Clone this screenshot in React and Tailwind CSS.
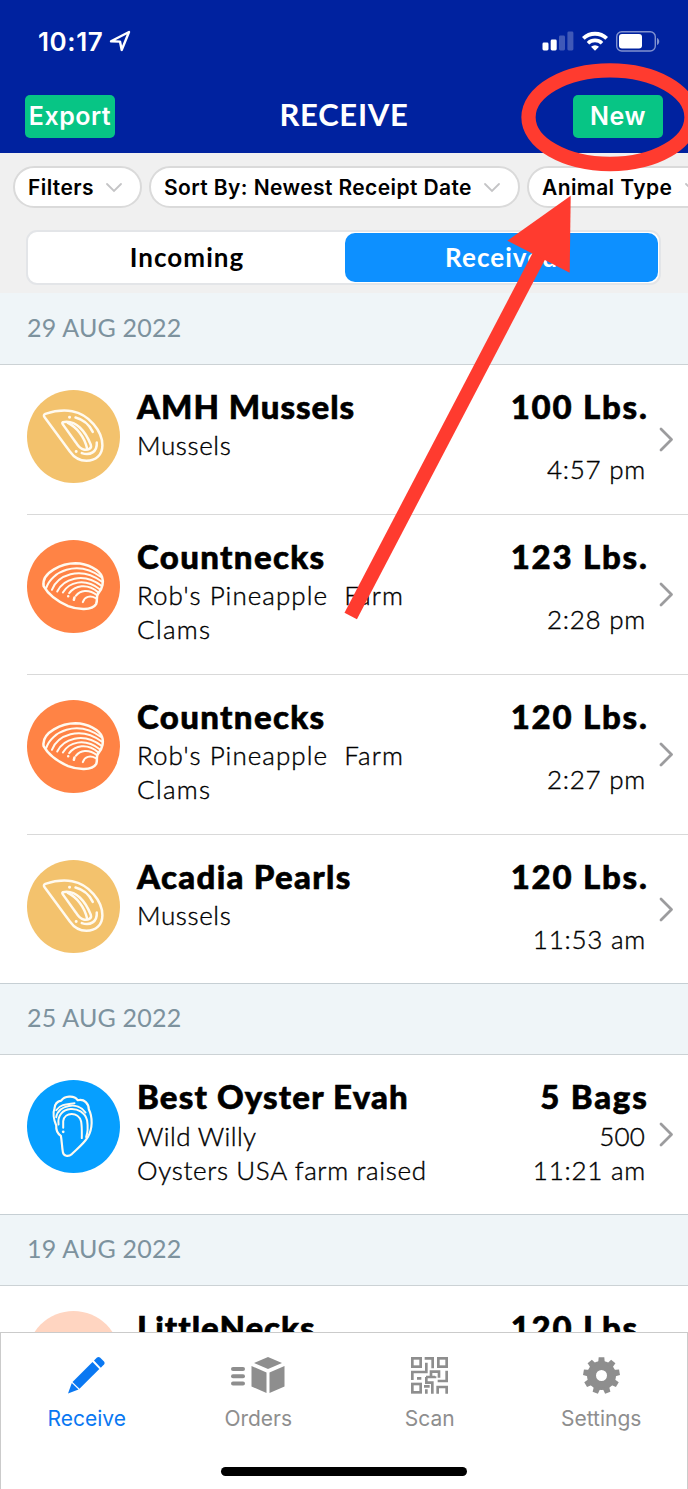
import clsx from "clsx";

const groups = [
  {
    date: "29 AUG 2022",
    rows: [
      { kind: "mussel", name: "AMH Mussels", spacing: "tracking-[0.95px]", lines: [["Mussels", "tracking-[0.6px]"]], qty: "100 Lbs.", time: "4:57 pm", height: "h-[150px]" },
      { kind: "clam", name: "Countnecks", spacing: "tracking-[1.35px]", lines: [["Rob's Pineapple  Farm", "tracking-[1.04px]"], ["Clams", "tracking-[1.3px]"]], qty: "123 Lbs.", time: "2:28 pm", height: "h-[160px]" },
      { kind: "clam", name: "Countnecks", spacing: "tracking-[1.35px]", lines: [["Rob's Pineapple  Farm", "tracking-[1.04px]"], ["Clams", "tracking-[1.3px]"]], qty: "120 Lbs.", time: "2:27 pm", height: "h-[160px]" },
      { kind: "mussel", name: "Acadia Pearls", spacing: "tracking-[1.3px]", lines: [["Mussels", "tracking-[0.6px]"]], qty: "120 Lbs.", time: "11:53 am", height: "h-[149px]" },
    ],
  },
  {
    date: "25 AUG 2022",
    rows: [
      { kind: "oyster", name: "Best Oyster Evah", spacing: "tracking-[1.15px]", lines: [["Wild Willy", "tracking-[0.4px]"], ["Oysters USA farm raised", "tracking-[0.66px]"]], qty: "5 Bags", count: "500", time: "11:21 am", height: "h-[160px]" },
    ],
  },
  {
    date: "19 AUG 2022",
    rows: [
      { kind: "none", name: "LittleNecks", spacing: "tracking-[1px]", lines: [], qty: "120 Lbs.", time: "", height: "h-[160px]" },
    ],
  },
];

function StatusBar() {
  return (
    <div className="flex h-[82px] items-center justify-between pl-[38px] pr-[28px] text-white">
      <div className="flex items-center gap-[6px]">
        <span className="pt-px font-['Inter',sans-serif] text-[26px] font-semibold leading-none tracking-[0.6px]">10:17</span>
        <svg width="22" height="22" viewBox="0 0 22 22" fill="none" stroke="white" strokeWidth="2.4" strokeLinejoin="round">
          <path d="M2 11.2 20 2 12.7 20 11 11.6Z" />
        </svg>
      </div>
      <div className="flex items-center gap-[8px]">
        <svg width="32" height="20" viewBox="0 0 32 20" fill="white">
          <rect x="0.5" y="11.5" width="6" height="8" rx="1.4" />
          <rect x="8.7" y="8.5" width="6" height="11" rx="1.4" />
          <rect x="17" y="4.5" width="6" height="15" rx="1.4" opacity="0.25" />
          <rect x="25.4" y="0.5" width="6" height="19" rx="1.4" opacity="0.25" />
        </svg>
        <svg width="26" height="20" viewBox="0 0 26 20" fill="none" stroke="white" strokeWidth="4">
          <path d="M1.3 7.4a16.8 16.8 0 0 1 23.4 0" />
          <path d="M6 12.2a10.2 10.2 0 0 1 14 0" strokeWidth="3.6" />
          <path d="M9 15.7a6 6 0 0 1 8 0L13 19.8Z" fill="white" stroke="none" />
        </svg>
        <svg width="44" height="21" viewBox="0 0 44 21">
          <rect x="0.7" y="0.7" width="38.6" height="19.3" rx="5" fill="none" stroke="white" strokeWidth="1.4" opacity="0.5" />
          <rect x="3" y="3" width="23" height="14.6" rx="3" fill="white" />
          <path d="M41 7v7c3-1.200 3-5.800 0-7Z" fill="white" opacity="0.5" />
        </svg>
      </div>
    </div>
  );
}

function Header() {
  return (
    <header className="h-[153px] shrink-0 bg-[#00229f]">
      <StatusBar />
      <div className="flex items-start justify-between px-[25px] pt-[13px] text-white">
        <button className="h-[43px] w-[90px] rounded-[5px] bg-[#07c585] font-['Inter',sans-serif] text-[25px] font-semibold leading-[43px] tracking-[0.5px]">
          Export
        </button>
        <h1 className="text-[31px] font-bold leading-[39px] tracking-[0.7px]">RECEIVE</h1>
        <button className="h-[43px] w-[90px] rounded-[5px] bg-[#07c585] font-['Inter',sans-serif] text-[25px] font-semibold leading-[43px] tracking-[0.5px]">
          New
        </button>
      </div>
    </header>
  );
}

function Pill({ label, className }) {
  return (
    <button
      className={clsx(
        "flex h-[42px] shrink-0 items-center justify-between rounded-full border-2 border-[#dadada] bg-white pl-[13px] pr-[17px] font-['Inter',sans-serif] text-[21px] font-semibold tracking-[0.4px] text-black",
        className
      )}
    >
      <span className="whitespace-nowrap pt-[2px]">{label}</span>
      <svg width="18" height="11" viewBox="0 0 18 11" fill="none" stroke="#c4c4c6" strokeWidth="1.8" strokeLinecap="round">
        <path d="M2 2l7 7 7-7" />
      </svg>
    </button>
  );
}

function Filters() {
  return (
    <div className="h-[140px] shrink-0 bg-[#f0f0f0] pt-[13px]">
      <div className="flex gap-[7px] overflow-hidden pl-[13px]">
        <Pill label="Filters" className="w-[129px]" />
        <Pill label="Sort By: Newest Receipt Date" className="w-[371px]" />
        <Pill label="Animal Type" className="w-[194px]" />
      </div>
      <div className="ml-[26px] mt-[22px] flex h-[55px] w-[635px] rounded-[11px] border-2 border-[#e3e5e8] bg-white p-px text-[26px] font-bold tracking-[1.05px]">
        <button className="flex-1 pb-px leading-[47px]">Incoming</button>
        <button className="w-[313px] rounded-[10px] bg-[#0d90ff] pb-px leading-[47px] text-white">Received</button>
      </div>
    </div>
  );
}

const badgeColors = {
  mussel: "bg-[#f3c26d]",
  clam: "bg-[#ff8345]",
  oyster: "bg-[#069fff]",
  none: "bg-[#ffd5c1]",
};

function Shell({ kind }) {
  return (
    <svg className="size-full" viewBox="0 0 280 280" fill="none" stroke="#fffaf0" strokeWidth="7.5" strokeLinecap="round" strokeLinejoin="round">
      {kind === "mussel" && (
        <>
          <path d="M55 72C82 63 112 60 136 64 186 73 227 124 227 166c0 30-20 47-48 47-24 0-38-11-50-28L53 82q-5-7 2-10Z" />
          <path d="M108 97c40-8 68 28 84 68 4 11-8 17-22 14-10-2-17-11-23-21l-38-53q-5-6-1-8Z" />
          <path d="M122 98c28 14 51 43 59 78" />
          <path d="M146 83c24 6 41 21 52 43" />
          <path d="M210 158c2 28-20 41-45 32" />
          <path d="M128 82h.1M148 185h.1" strokeWidth="9" />
        </>
      )}
      {kind === "clam" && (
        <>
          <path d="M50 139C43 96 108 70 146 70c38 1 72 20 80 41 5 14 2 34-11 49-9 10-1 20-7 33-12 20-56 17-84 6-30-13-60-35-74-60Z" />
          <path d="M58 144C74 96 150 58 224 112" strokeWidth="6" />
          <path d="M75 150C92 108 158 76 225 125" strokeWidth="6" />
          <path d="M91 155C108 119 168 94 224 138" strokeWidth="6" />
          <path d="M108 158C126 128 172 112 220 149" strokeWidth="6" />
          <path d="M127 160C144 138 180 128 215 158" strokeWidth="6" />
          <path d="M147 168C160 152 184 146 211 166" strokeWidth="6" />
          <path d="M168 187C174 170 190 166 207 175" strokeWidth="6" />
          <path d="M124 169h.1M143 173l-2 7" />
        </>
      )}
      {kind === "oyster" && (
        <>
          <path d="M103 62C112 49 141 44 153 61c20-5 33 11 33 27 12 24 12 58-3 84-13 21-33 36-48 51-11 9-25 6-27-6-3-17-3-33-6-49-12-8-15-18-14-31-8-17-10-39-5-52 1-13 9-21 20-23Z" strokeWidth="6.500" />
          <path d="M88 91c14-20 36-18 55-21" strokeWidth="6" />
          <path d="M88 112c6-38 66-48 88-14" strokeWidth="6" />
          <path d="M95 134c-8-58 74-62 86-12 3 20 2 36-3 50" strokeWidth="6" />
          <path d="M109 144v-20c4-28 46-30 54 1 3 18 2 36 2 50" strokeWidth="6" />
          <path d="M109 156h.1" strokeWidth="8" />
        </>
      )}
    </svg>
  );
}

function Row({ kind, name, spacing, lines, qty, count, time, height, last }) {
  return (
    <li className={clsx("flex pl-[27px]", height, last && "border-b border-[#c6cfd4]")}>
      <div className={clsx("flex flex-1", !last && "border-b border-[#d9d9d9]")}>
        <div className={clsx("mt-[25px] size-[93px] shrink-0 rounded-full", badgeColors[kind])}>
          <Shell kind={kind} />
        </div>
        <div className="ml-[17px] flex-1 pt-[22px]">
          <h2
            className={clsx(
              "whitespace-nowrap text-[33px] font-black leading-[38px] [-webkit-text-stroke:0.6px_black]",
              count ? "mb-[4px]" : "mb-[3px]",
              spacing
            )}
          >
            {name}
          </h2>
          {lines.map(([text, tracking]) => (
            <p key={text} className={clsx("whitespace-pre text-[26px] font-light leading-[34px] [-webkit-text-stroke:0.4px_black]", tracking)}>
              {text}
            </p>
          ))}
        </div>
        <div className="pt-[22px] text-right">
          <p className="-mr-[1.5px] whitespace-nowrap text-[33px] font-black leading-[38px] tracking-[1.75px] [-webkit-text-stroke:0.6px_black]">{qty}</p>
          <div
            className={clsx(
              "pr-[1px] text-[26px] font-light leading-[34px] tracking-[0.75px] [-webkit-text-stroke:0.4px_black]",
              count ? "mt-[4px]" : "mt-[27px]"
            )}
          >
            {count && <p className="pr-px tracking-[0.2px]">{count}</p>}
            <p>{time}</p>
          </div>
        </div>
        <svg className="mb-px ml-[11px] mr-[14px] self-center" width="16" height="26" viewBox="0 0 16 26" fill="none" stroke="#9c9c9e" strokeWidth="2.8" strokeLinecap="round" strokeLinejoin="round">
          <path d="M3 3l10.500 10.500L3 24" />
        </svg>
      </div>
    </li>
  );
}

function Tab({ label, active, children }) {
  return (
    <button className={clsx("flex flex-1 flex-col items-center pt-[23px]", active ? "text-[#0a78f2]" : "text-[#8e8e8e]")}>
      <span className="flex h-[38px] items-center">{children}</span>
      <span className="mt-[12px] font-['Inter',sans-serif] text-[21px] leading-[26px]">{label}</span>
    </button>
  );
}

function TabBar() {
  return (
    <nav className="h-[157px] shrink-0 border-x border-t border-[#cbcbcb] bg-white">
      <div className="flex h-[134px]">
        <Tab label="Receive" active>
          <svg className="mr-[2px]" width="38" height="38" viewBox="0 0 38 38" fill="currentColor">
            <path d="M27 4.500 30 1.500q1.500-1.200 3 0l4 4q1.200 1.500 0 3l-3.200 3.200Z" />
            <path d="M25.500 6 32.300 13 12.500 32.800 5.500 26Z" />
            <path d="M4.800 27 11.500 33.500 1 37.500Z" />
          </svg>
        </Tab>
        <Tab label="Orders">
          <svg width="54" height="38" viewBox="0 0 54 38" fill="currentColor">
            <rect x="0" y="11" width="14" height="4" rx="2" />
            <rect x="0" y="18.200" width="14" height="4" rx="2" />
            <rect x="0" y="25.500" width="14" height="4" rx="2" />
            <path d="M23 7 37 1 51 7 37 13Z" />
            <path d="M20.500 10 35.500 16.500V37L20.500 30.500Z" />
            <path d="M38.500 16.500 53.500 10V30.500L38.500 37Z" />
          </svg>
        </Tab>
        <Tab label="Scan">
          <svg width="37" height="37" viewBox="0 0 111 111" fill="none" stroke="currentColor" strokeWidth="8">
            <rect x="4" y="4" width="25" height="25" />
            <rect x="82" y="4" width="25" height="25" />
            <rect x="4" y="81" width="25" height="25" />
            <path d="M41 4H65V34M46 17V45H4V69M18 64H31" />
            <path d="M107 41V72H80M45 60H60V44H84V62M59 60H72V58M46 60V77H64V110M80 110V90H107V110M46 97V110M39 88H56" />
          </svg>
        </Tab>
        <Tab label="Settings">
          <svg width="37" height="37" viewBox="-18.500 -18.500 37 37" fill="none" stroke="currentColor">
            <circle r="10" strokeWidth="9" />
            {[0, 40, 80, 120, 160, 200, 240, 280, 320].map((a) => (
              <path key={a} d="M-3.400-12-2.800-18.300H2.800L3.400-12Z" transform={`rotate(${a})`} fill="currentColor" stroke="none" />
            ))}
          </svg>
        </Tab>
      </div>
      <div className="mx-auto h-[9px] w-[246px] rounded-full bg-black" />
    </nav>
  );
}

function Highlight() {
  return (
    <svg className="pointer-events-none absolute left-0 top-0" width="688" height="640" viewBox="0 0 688 640">
      <ellipse cx="610" cy="117.200" rx="81.500" ry="46.800" fill="none" stroke="#ff3b2f" strokeWidth="14.300" />
      <path d="M350.700 616 540 254" stroke="#ff3b2f" strokeWidth="14" />
      <path d="M570.700 195.700 507.300 240.700 569.700 272.700Z" fill="#ff3b2f" />
    </svg>
  );
}

export default function App() {
  return (
    <div className="relative flex h-[1489px] w-[688px] flex-col overflow-hidden bg-white font-['Lato',sans-serif] text-black">
      <Header />
      <Filters />
      <main className="min-h-0 flex-1 overflow-hidden">
        {groups.map((group, i) => (
          <section key={group.date}>
            <h3
              className={clsx(
                "flex items-center border-b border-[#ccd2d5] bg-[#eff5f8] pb-[2px] pl-[27px] text-[25px] tracking-[0.2px] text-[#7d929e]",
                i === 0 ? "h-[72px]" : "h-[71px]"
              )}
            >
              {group.date}
            </h3>
            <ul>
              {group.rows.map((row, j) => (
                <Row key={j} {...row} last={j === group.rows.length - 1} />
              ))}
            </ul>
          </section>
        ))}
      </main>
      <TabBar />
      <Highlight />
    </div>
  );
}
